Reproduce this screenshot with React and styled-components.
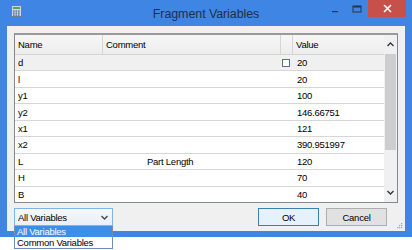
import React from "react";
import styled, { createGlobalStyle } from "styled-components";

const GlobalStyle = createGlobalStyle`
  body {
    margin: 0;
    background: #ffffff;
    font-family: "Liberation Sans", Arial, sans-serif;
    font-size: 9.5px;
    letter-spacing: -0.25px;
    color: #000;
  }
`;

const Page = styled.div`
  height: 250px;
  overflow: hidden;
`;

const Window = styled.div`
  width: 412px;
  height: 237px;
  box-sizing: border-box;
  background: #3f86e4;
  padding: 0 7px 6px;
  display: flex;
  flex-direction: column;
`;

const TitleBar = styled.div`
  height: 26px;
  display: grid;
  grid-template-columns: 1fr auto 1fr;
  align-items: start;
`;

const AppIcon = styled.div`
  padding: 5px 0 0 4px;
`;

const Title = styled.div`
  font-size: 12.5px;
  letter-spacing: -0.1px;
  color: #1f2f4d;
  padding-top: 7px;
`;

const Controls = styled.div`
  display: flex;
  justify-content: flex-end;
  align-items: flex-start;
  margin-right: -1px;
`;

const CtlButton = styled.div`
  width: ${(p) => p.$w}px;
  height: 17px;
  display: flex;
  align-items: center;
  justify-content: center;
  background: ${(p) => (p.$close ? "#c7504b" : "transparent")};
`;

const Client = styled.div`
  flex: 1;
  background: #f0f0f0;
  padding: 7px 7px 0;
  display: flex;
  flex-direction: column;
  position: relative;
`;

const Grid = styled.div`
  height: 170px;
  box-sizing: border-box;
  border: 1px solid #828790;
  border-top: 2px solid #9a9a9a;
  background: #fff;
  display: flex;
`;

const Rows = styled.div`
  flex: 1;
  display: flex;
  flex-direction: column;
`;

const COLS = "88px 178px 12px 1fr";

const HeaderRow = styled.div`
  height: 19px;
  flex: none;
  display: grid;
  grid-template-columns: ${COLS};
  background: linear-gradient(#f7f7f7, #ececec);
  border-bottom: 1px solid #d5d5d5;
`;

const HeadCell = styled.div`
  display: flex;
  align-items: center;
  padding-left: 3px;
  border-right: 1px solid #d5d5d5;
  &:last-child {
    border-right: none;
  }
`;

const Row = styled.div`
  flex: 1;
  display: grid;
  grid-template-columns: ${COLS};
  background: ${(p) => (p.$selected ? "#f0f0f0" : "#fff")};
  border-bottom: 1px solid #d6d6d6;
  &:last-child {
    border-bottom: none;
  }
`;

const Cell = styled.div`
  display: flex;
  align-items: center;
  padding-left: ${(p) => p.$indent || 3}px;
  white-space: nowrap;
`;

const CheckBox = styled.span`
  width: 6px;
  height: 6px;
  border: 1px solid #5a6d8c;
  background: #fff;
  margin-left: -1px;
`;

const ScrollBar = styled.div`
  width: 13px;
  background: #f0f0f0;
  display: flex;
  flex-direction: column;
  align-items: center;
`;

const ScrollArrow = styled.div`
  height: 19px;
  width: 100%;
  display: flex;
  align-items: center;
  justify-content: center;
  flex: none;
`;

const Thumb = styled.div`
  width: 11px;
  height: 96px;
  background: #cdcdcd;
`;

const Spacer = styled.div`
  flex: 1;
`;

const BottomBar = styled.div`
  margin-top: 5px;
  height: 18px;
  display: flex;
  align-items: center;
  gap: 7px;
  padding-right: 11px;
`;

const Combo = styled.div`
  position: relative;
  width: 99px;
  height: 18px;
  margin-right: auto;
`;

const ComboBox = styled.div`
  height: 100%;
  box-sizing: border-box;
  border: 1px solid #7eb4ea;
  background: linear-gradient(#f4f8fc, #e9eff6);
  display: flex;
  align-items: center;
  justify-content: space-between;
  padding: 0 4px 0 3px;
`;

const DropList = styled.div`
  position: absolute;
  top: 100%;
  left: 0;
  width: 100%;
  box-sizing: border-box;
  border: 1px solid #6f8fb8;
  border-top: none;
  background: #fff;
  z-index: 2;
`;

const DropItem = styled.div`
  height: 11px;
  line-height: 11px;
  padding-left: 2px;
  background: ${(p) => (p.$active ? "#3d8ee8" : "#fff")};
  color: ${(p) => (p.$active ? "#fff" : "#000")};
`;

const Button = styled.div`
  width: 61px;
  height: 18px;
  box-sizing: border-box;
  border: 1px solid ${(p) => (p.$default ? "#3c7fb1" : "#adadad")};
  background: ${(p) => (p.$default ? "#e5f1fb" : "#e1e1e1")};
  display: flex;
  align-items: center;
  justify-content: center;
`;

const Grip = styled.svg`
  position: absolute;
  right: 2px;
  bottom: 2px;
`;

const rows = [
  { name: "d", value: "20", selected: true, check: true },
  { name: "l", value: "20" },
  { name: "y1", value: "100" },
  { name: "y2", value: "146.66751" },
  { name: "x1", value: "121" },
  { name: "x2", value: "390.951997" },
  { name: "L", comment: "Part Length", value: "120" },
  { name: "H", value: "70" },
  { name: "B", value: "40" },
];

const CalcIcon = () => (
  <svg width="11" height="12" viewBox="0 0 11 12">
    <rect x="0.5" y="0.5" width="10" height="11" fill="#c9d6e6" stroke="#6b7f99" />
    <rect x="2" y="2" width="7" height="2" fill="#4fae4a" />
    {[0, 1, 2].map((r) =>
      [0, 1, 2].map((c) => (
        <rect key={`${r}-${c}`} x={2 + c * 2.5} y={5.5 + r * 2} width="1.6" height="1.2" fill="#46607f" />
      ))
    )}
  </svg>
);

const App = () => (
  <Page>
    <GlobalStyle />
    <Window>
      <TitleBar>
        <AppIcon>
          <CalcIcon />
        </AppIcon>
        <Title>Fragment Variables</Title>
        <Controls>
          <CtlButton $w={22}>
            <svg width="8" height="8" viewBox="0 0 8 8">
              <rect x="1" y="6" width="6" height="1.2" fill="#23344f" />
            </svg>
          </CtlButton>
          <CtlButton $w={22}>
            <svg width="10" height="8" viewBox="0 0 10 8">
              <rect x="1" y="1" width="8" height="6" fill="none" stroke="#23344f" strokeWidth="1" />
              <rect x="1" y="1" width="8" height="1.5" fill="#23344f" />
            </svg>
          </CtlButton>
          <CtlButton $w={38} $close>
            <svg width="9" height="9" viewBox="0 0 9 9">
              <path d="M1 1 L8 8 M8 1 L1 8" stroke="#fff" strokeWidth="1.6" />
            </svg>
          </CtlButton>
        </Controls>
      </TitleBar>
      <Client>
        <Grid>
          <Rows>
            <HeaderRow>
              <HeadCell>Name</HeadCell>
              <HeadCell>Comment</HeadCell>
              <HeadCell />
              <HeadCell>Value</HeadCell>
            </HeaderRow>
            {rows.map((r) => (
              <Row key={r.name} $selected={r.selected}>
                <Cell>{r.name}</Cell>
                <Cell $indent={44}>{r.comment}</Cell>
                <Cell $indent={2}>{r.check && <CheckBox />}</Cell>
                <Cell $indent={4}>{r.value}</Cell>
              </Row>
            ))}
          </Rows>
          <ScrollBar>
            <ScrollArrow>
              <svg width="7" height="5" viewBox="0 0 7 5">
                <path d="M0.5 4 L3.5 1 L6.5 4" fill="none" stroke="#333" strokeWidth="1.3" />
              </svg>
            </ScrollArrow>
            <Thumb />
            <Spacer />
            <ScrollArrow>
              <svg width="7" height="5" viewBox="0 0 7 5">
                <path d="M0.5 1 L3.5 4 L6.5 1" fill="none" stroke="#333" strokeWidth="1.3" />
              </svg>
            </ScrollArrow>
          </ScrollBar>
        </Grid>
        <BottomBar>
          <Combo>
            <ComboBox>
              <span>All Variables</span>
              <svg width="7" height="5" viewBox="0 0 7 5">
                <path d="M0.5 1 L3.5 4 L6.5 1" fill="none" stroke="#444" strokeWidth="1.3" />
              </svg>
            </ComboBox>
            <DropList>
              <DropItem $active>All Variables</DropItem>
              <DropItem>Common Variables</DropItem>
            </DropList>
          </Combo>
          <Button $default>OK</Button>
          <Button>Cancel</Button>
        </BottomBar>
        <Grip width="6" height="6" viewBox="0 0 6 6">
          {[
            [4, 0],
            [2, 2],
            [4, 2],
            [0, 4],
            [2, 4],
            [4, 4],
          ].map(([x, y]) => (
            <rect key={`${x}${y}`} x={x} y={y} width="1.2" height="1.2" fill="#a0a0a0" />
          ))}
        </Grip>
      </Client>
    </Window>
  </Page>
);

export default App;
